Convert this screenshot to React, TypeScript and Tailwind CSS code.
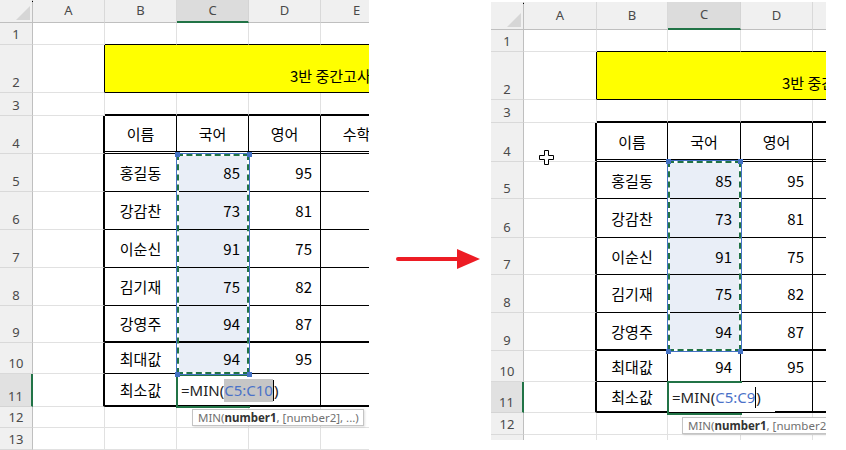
import React from "react";

const KR = "font-['Noto_Sans_CJK_KR','Noto_Sans',sans-serif]";
const UI = "font-['Noto_Sans','Noto_Sans_CJK_KR',sans-serif]";

const tableRows: [string, string, string][] = [
  ["홍길동", "85", "95"],
  ["강감찬", "73", "81"],
  ["이순신", "91", "75"],
  ["김기재", "75", "82"],
  ["강영주", "94", "87"],
  ["최대값", "94", "95"],
];
const heads = ["이름", "국어", "영어", "수학"];
const letters = ["A", "B", "C", "D", "E"];

function cellClass(r: number, c: number, selLast: number): string {
  if (r === 1 && c >= 1) return "border-r border-r-[#e1e1e1] border-b border-b-black";
  if (r === 3 && c >= 1) return "border-r border-r-[#e1e1e1] border-b-2 border-b-black";
  if (r >= 4 && r <= 11) {
    if (c === 0) return "border-r-2 border-r-black border-b border-b-[#e1e1e1]";
    let base = "border-r border-r-black border-b border-b-black";
    if (r === 4) base = "border-r border-r-black border-b-[3px] border-double border-b-black";
    if (r === 9 || r === 11) base = "border-r border-r-black border-b-2 border-b-black";
    const fill = c === 2 && r >= 5 && r <= selLast ? "bg-[#e9eef7]" : "";
    const align = c === 1 || r === 4 ? "justify-center" : "justify-end pr-[8px]";
    return `flex items-center pt-[2px] whitespace-nowrap ${base} ${fill} ${align} ${KR} text-[15px] text-black`;
  }
  return "border-r border-b border-[#e1e1e1]";
}

function cellContent(r: number, c: number): string {
  if (r === 4 && c >= 1) return heads[c - 1];
  if (r >= 5 && r <= 10 && c >= 1 && c <= 3) return tableRows[r - 5][c - 1];
  if (r === 11 && c === 1) return "최소값";
  return "";
}

function Grid({ left }: { left: boolean }) {
  const selLast = left ? 10 : 9;
  const cells: React.ReactNode[] = [];
  cells.push(
    <div
      key="corner"
      className="relative flex items-end justify-end pr-[2px] pb-[2px] bg-[#f0f0f0] border-r border-b border-[#bfbfbf]"
    >
      <svg width="14" height="14" viewBox="0 0 14 14">
        <polygon points="14,0 14,14 0,14" fill="#d6d6d6" />
      </svg>
      <span className="absolute right-[-1px] top-[1px] w-px h-px bg-black" />
    </div>
  );
  letters.forEach((l, i) =>
    cells.push(
      <div
        key={"h" + l}
        className={
          i === 2
            ? `flex items-center justify-center bg-[#dcdcdc] border-r border-r-[#d4d4d4] border-b-2 border-b-[#217346] ${UI} text-[13px] text-[#4a4a4a]`
            : `flex items-center justify-center bg-[#f0f0f0] border-r border-r-[#d9d9d9] border-b border-b-[#bfbfbf] ${UI} text-[13px] text-[#4a4a4a]`
        }
      >
        {l}
      </div>
    )
  );
  for (let r = 1; r <= 13; r++) {
    cells.push(
      <div
        key={"r" + r}
        className={
          r === 11
            ? `flex items-end justify-center pb-[1px] bg-[#e1e1e1] border-r-2 border-r-[#217346] border-b border-b-[#d4d4d4] ${UI} text-[13px] leading-[18px] text-[#4a4a4a]`
            : `flex items-end justify-center pb-[1px] bg-[#f0f0f0] border-r border-r-[#bfbfbf] border-b border-b-[#d9d9d9] ${UI} text-[13px] leading-[18px] text-[#4a4a4a]`
        }
      >
        {r}
      </div>
    );
    if (r === 2) {
      cells.push(<div key="a2" className="border-r border-r-black border-b border-b-[#e1e1e1]" />);
      cells.push(
        <div
          key="title"
          className={`col-span-4 flex items-end pl-[185px] pb-[5px] bg-[#ffff00] border-b border-b-black whitespace-nowrap ${KR} text-[15px] text-black`}
        >
          3반 중간고사 성적표
        </div>
      );
      continue;
    }
    for (let c = 0; c < 5; c++) {
      cells.push(
        <div key={`c${r}-${c}`} className={cellClass(r, c, selLast)}>
          {cellContent(r, c)}
        </div>
      );
    }
  }
  return (
    <div
      className={
        left
          ? "grid grid-cols-[33px_72px_72px_72px_72px_72px] grid-rows-[23px_22px_48px_23px_38px_38px_38px_38px_38px_37px_31px_33px_21px_22px]"
          : "grid grid-cols-[33px_73px_71px_73px_72px_72px] grid-rows-[28px_22px_48px_23px_39px_37px_39px_37px_38px_38px_31px_31px_22px_22px]"
      }
    >
      {cells}
    </div>
  );
}

function Handle({ className }: { className: string }) {
  return <div className={`absolute w-[5px] h-[5px] bg-[#4472c4] ${className}`} />;
}

function Tip({ className }: { className: string }) {
  return (
    <div
      className={`absolute h-[17px] flex items-center pl-[5px] pr-[4px] bg-white border border-[#c4c4c4] shadow-[1px_1px_2px_rgba(0,0,0,0.12)] whitespace-nowrap ${UI} text-[11.5px] text-[#707070] ${className}`}
    >
      MIN(<span className="font-bold text-[#333]">number1</span>, [number2], ...)
    </div>
  );
}

function LeftSheet() {
  return (
    <div className="relative w-[369px] h-[450px] overflow-hidden shrink-0">
      <Grid left />
      <div className="absolute left-[176px] top-[374px] w-[74px] h-[34px] border-l-2 border-t-2 border-b-2 border-[#217346]" />
      <div className={`absolute left-[178px] top-[376px] w-[104px] h-[29px] bg-white flex items-center pl-[3px] whitespace-nowrap ${UI} text-[15px] text-[#222]`}>
        <span>=MIN(</span>
        <span className="bg-[#c6c6c6] text-[#4a72c8]">C5:C10</span>
        <span className="inline-block w-px h-[21px] bg-black" />
        <span>)</span>
      </div>
      <div className="absolute left-[176px] top-[153px] w-[74px] h-[222px] border border-[#4472c4]">
        <div className="w-full h-full border-2 border-white" />
      </div>
      <div className="absolute left-[177px] top-[154px] w-[72px] h-[220px] border-2 border-dashed border-[#217346]" />
      <Handle className="left-[175px] top-[152px]" />
      <Handle className="left-[247px] top-[152px]" />
      <Handle className="left-[175px] top-[372px]" />
      <Handle className="left-[247px] top-[372px]" />
      <Tip className="left-[192px] top-[409px]" />
    </div>
  );
}

function RightSheet() {
  return (
    <div className="relative w-[335px] h-[438px] mt-[2px] overflow-hidden shrink-0">
      <Grid left={false} />
      <div className="absolute left-[176px] top-[379px] w-[75px] h-[34px] border-l-2 border-t-2 border-b-2 border-[#217346]" />
      <div className={`absolute left-[178px] top-[381px] w-[106px] h-[29px] bg-white flex items-center pl-[3px] whitespace-nowrap ${UI} text-[15px] text-[#222]`}>
        <span>=MIN(</span>
        <span className="text-[#4a72c8]">C5:C9</span>
        <span className="inline-block w-px h-[21px] bg-black" />
        <span>)</span>
      </div>
      <div className="absolute left-[176px] top-[158px] w-[75px] h-[192px] border border-[#4472c4]">
        <div className="w-full h-full border-2 border-white" />
      </div>
      <div className="absolute left-[177px] top-[159px] w-[73px] h-[190px] border-2 border-dashed border-[#217346]" />
      <Handle className="left-[175px] top-[157px]" />
      <Handle className="left-[247px] top-[157px]" />
      <Handle className="left-[175px] top-[347px]" />
      <Handle className="left-[247px] top-[347px]" />
      <Tip className="left-[191px] top-[415px]" />
      <svg className="absolute left-[48px] top-[148px]" width="15" height="15" viewBox="0 0 15 15">
        <polygon
          points="5.5,0.5 9.5,0.5 9.5,5.5 14.5,5.5 14.5,9.5 9.5,9.5 9.5,14.5 5.5,14.5 5.5,9.5 0.5,9.5 0.5,5.5 5.5,5.5"
          fill="white"
          stroke="black"
          strokeWidth="1"
        />
      </svg>
    </div>
  );
}

export default function App() {
  return (
    <div className="flex w-[846px] h-[450px] bg-white overflow-hidden">
      <LeftSheet />
      <div className="w-[122px] shrink-0 pt-[248px] pl-[27px]">
        <svg width="84" height="22" viewBox="0 0 84 22">
          <line x1="2" y1="11" x2="63" y2="11" stroke="#ed1c24" strokeWidth="4" strokeLinecap="round" />
          <polygon points="61,1 84,11 61,21" fill="#ed1c24" />
        </svg>
      </div>
      <RightSheet />
    </div>
  );
}
